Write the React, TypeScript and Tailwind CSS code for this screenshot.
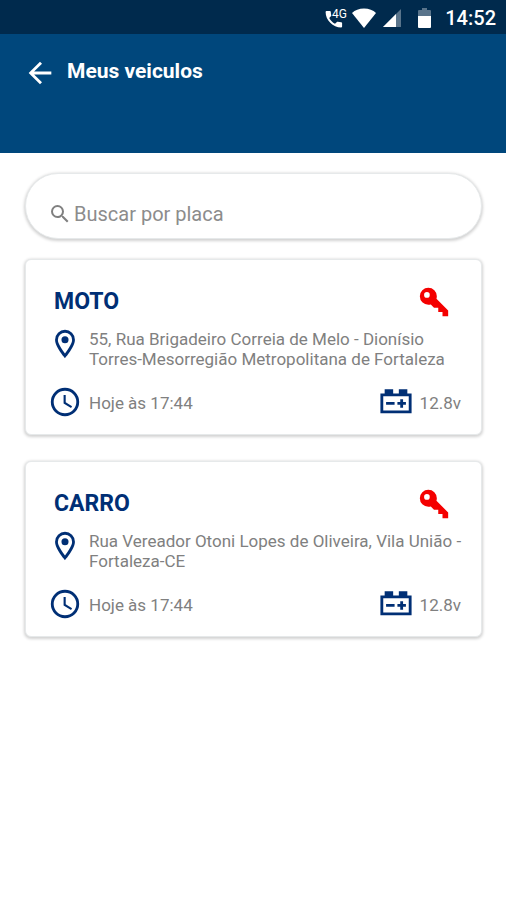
import React, { useState } from "react";
import { MdArrowBack, MdSearch } from "react-icons/md";

interface IVehicle {
  name: string;
  address: string;
  updatedAt: string;
  voltage: string;
}

const vehicles: IVehicle[] = [
  {
    name: "MOTO",
    address:
      "55, Rua Brigadeiro Correia de Melo - Dionísio Torres-Mesorregião Metropolitana de Fortaleza",
    updatedAt: "Hoje às 17:44",
    voltage: "12.8v",
  },
  {
    name: "CARRO",
    address: "Rua Vereador Otoni Lopes de Oliveira, Vila União - Fortaleza-CE",
    updatedAt: "Hoje às 17:44",
    voltage: "12.8v",
  },
];

const icons = {
  key: "M22,18V22H18V19H15V16H12L9.74,13.74C9.19,13.91 8.61,14 8,14A6,6 0 0,1 2,8A6,6 0 0,1 8,2A6,6 0 0,1 14,8C14,8.61 13.91,9.19 13.74,9.74L22,18M7,5A2,2 0 0,0 5,7A2,2 0 0,0 7,9A2,2 0 0,0 9,7A2,2 0 0,0 7,5Z",
  pin: "M12,6.5A2.5,2.5 0 0,1 14.5,9A2.5,2.5 0 0,1 12,11.5A2.5,2.5 0 0,1 9.5,9A2.5,2.5 0 0,1 12,6.5M12,2A7,7 0 0,1 19,9C19,14.25 12,22 12,22C12,22 5,14.25 5,9A7,7 0 0,1 12,2M12,4A5,5 0 0,0 7,9C7,10 7,12 12,18.71C17,12 17,10 17,9A5,5 0 0,0 12,4Z",
  clock:
    "M12,20A8,8 0 0,0 20,12A8,8 0 0,0 12,4A8,8 0 0,0 4,12A8,8 0 0,0 12,20M12,2A10,10 0 0,1 22,12A10,10 0 0,1 12,22A10,10 0 0,1 2,12A10,10 0 0,1 12,2M12.5,7V12.25L17,14.92L16.25,16.15L11,13V7H12.5Z",
  battery:
    "M4,3V6H1V20H23V6H20V3H14V6H10V3H4M3,8H21V18H3V8M15,10V12H13V14H15V16H17V14H19V12H17V10H15M5,12V14H11V12H5Z",
};

const Icon = ({ path, className = "" }: { path: string; className?: string }) => (
  <svg viewBox="0 0 24 24" fill="currentColor" aria-hidden="true" className={`size-[34px] shrink-0 ${className}`}>
    <path d={path} />
  </svg>
);

const StatusBar = () => (
  <div className="flex h-[34px] items-center justify-end bg-[#002a4d] pr-[10px] pt-[2px] text-white">
    <div className="flex items-center">
      <svg viewBox="0 0 24 24" fill="currentColor" className="h-6 w-6">
        <path d="M2.500 5h3.400c.5 0 .9.400.9.900 0 1.200.2 2.300.500 3.300.1.300 0 .700-.2.900L5.200 12c1.300 2.500 3.300 4.500 5.800 5.800l1.900-1.900c.300-.200.600-.300.900-.200 1.100.300 2.200.500 3.400.500.500 0 .9.400.9.900V20.500c0 .5-.4.9-.9.900C8.900 21.400 1.600 14.200 1.600 5.900 1.600 5.400 2 5 2.500 5z" />
        <text x="8" y="12" fontSize="12" fontFamily="Roboto, sans-serif">
          4G
        </text>
      </svg>
      <svg viewBox="0 0 24 20" fill="currentColor" className="ml-1 h-5 w-6">
        <path d="M12 20 0 5C3 2 7 .5 12 .5S21 2 24 5z" />
      </svg>
      <svg viewBox="0 0 18 18" fill="currentColor" className="ml-[7px] size-[18px]">
        <path d="M18 0v18H0z" opacity="0.35" />
        <path d="M13 5v13H0z" />
      </svg>
      <svg viewBox="0 0 13 20" fill="currentColor" className="ml-[17px] h-5 w-[13px]">
        <path d="M4 0h5v2h3q1 0 1 1v6H0V3q0-1 1-1h3z" opacity="0.35" />
        <path d="M0 8h13v11q0 1-1 1H1q-1 0-1-1z" />
      </svg>
      <span className="ml-[14px] text-[20px] font-medium leading-6">14:52</span>
    </div>
  </div>
);

const VehicleCard = ({ vehicle }: { vehicle: IVehicle }) => (
  <article className="rounded-md border border-[#e6e9ea] bg-white pt-[25px] pr-4 pb-[15px] pl-[22px] shadow-[0_1px_3px_1px_rgba(0,0,0,0.18)]">
    <div className="flex items-center justify-between pr-[14px] pl-[6px]">
      <h2 className="text-[23px] font-bold leading-8 text-[#002f75]">{vehicle.name}</h2>
      <Icon path={icons.key} className="text-[#f40000]" />
    </div>
    <div className="mt-2 flex items-start gap-[7px]">
      <Icon path={icons.pin} className="text-[#002f75]" />
      <p className="pt-[2px] text-[17px] leading-5 text-[#808080]">{vehicle.address}</p>
    </div>
    <div className="mt-4 flex items-center justify-between">
      <div className="flex items-center gap-[7px]">
        <Icon path={icons.clock} className="text-[#002f75]" />
        <span className="pt-[2px] text-[17px] leading-5 text-[#808080]">{vehicle.updatedAt}</span>
      </div>
      <div className="flex items-center gap-[7px] pr-1">
        <Icon path={icons.battery} className="text-[#002f75]" />
        <span className="pt-[2px] text-[17px] leading-5 text-[#808080]">{vehicle.voltage}</span>
      </div>
    </div>
  </article>
);

const App = () => {
  const [search, setSearch] = useState("");

  return (
    <div className="min-h-screen bg-white font-[Roboto,sans-serif]">
      <StatusBar />
      <header className="flex items-center gap-[10px] bg-[#00477c] px-[23px] pt-[22px] pb-[63px] text-white">
        <button type="button" aria-label="Voltar">
          <MdArrowBack className="size-[34px]" />
        </button>
        <h1 className="pb-1 text-[21px] font-bold leading-6">Meus veiculos</h1>
      </header>
      <main className="pr-6 pl-[25px] pt-5">
        <label className="flex h-[66px] items-center gap-[2px] rounded-full border border-[#e6e9ea] bg-white pr-6 pl-[22px] pt-4 shadow-[0_1px_3px_1px_rgba(0,0,0,0.18)]">
          <MdSearch className="size-6 shrink-0 text-[#808080]" />
          <input
            className="w-full bg-transparent text-[20px] leading-6 text-[#808080] outline-none placeholder:text-[#8c8c8c]"
            type="text"
            aria-label="Buscar por placa"
            placeholder="Buscar por placa"
            value={search}
            onChange={(e) => setSearch(e.target.value)}
          />
        </label>
        <div className="mt-5 flex flex-col gap-[26px]">
          {vehicles.map((vehicle) => (
            <VehicleCard key={vehicle.name} vehicle={vehicle} />
          ))}
        </div>
      </main>
    </div>
  );
};

export default App;
